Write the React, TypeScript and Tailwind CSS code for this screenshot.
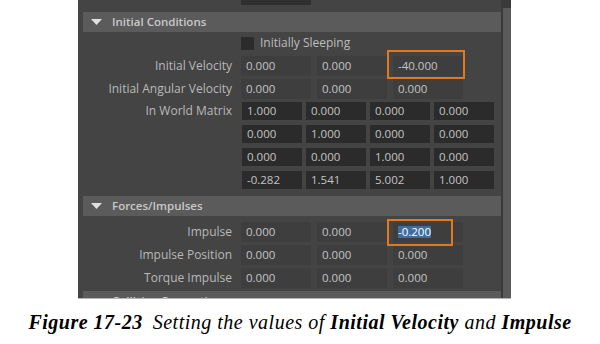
import React from 'react';

const ui = { fontFamily: '"Open Sans", "Noto Sans", sans-serif' };
const serif = { fontFamily: '"Liberation Serif", "DejaVu Serif", serif' };

const VecField: React.FC<{ value: string; children?: React.ReactNode }> = ({ value, children }) => (
    <div className="relative flex items-center w-[70px] h-[20px] pl-[5px] bg-[#3e3e3e] text-[11.5px] text-[#c4c4c4]">
        {value}
        {children}
    </div>
);

const MatField: React.FC<{ value: string }> = ({ value }) => (
    <div className="flex items-center w-[60px] h-[18px] pl-[5px] bg-[#2b2b2b] text-[11.5px] text-[#c4c4c4]">
        {value}
    </div>
);

const Label: React.FC<{ text?: string }> = ({ text }) => (
    <div className="w-[154px] shrink-0 text-right text-[12px] text-[#b9b9b9]">{text}</div>
);

const SectionHeader: React.FC<{ title: string; className?: string }> = ({ title, className }) => (
    <div className={`flex items-center shrink-0 ml-[5px] h-[20px] bg-[#5b5b5b] ${className ?? ''}`}>
        <svg width="11" height="6" viewBox="0 0 11 6" className="ml-[8px]">
            <polygon points="0,0 11,0 5.5,6" fill="#e0e0e0" />
        </svg>
        <span className="ml-[10px] text-[11.5px] font-semibold text-[#c9c9c9]">{title}</span>
    </div>
);

const VecRow: React.FC<{ label: string; values: string[]; third?: React.ReactNode }> = ({ label, values, third }) => (
    <div className="flex items-center shrink-0 h-[23px]">
        <Label text={label} />
        <div className="flex gap-[6px] ml-[9px]">
            <VecField value={values[0]} />
            <VecField value={values[1]} />
            {third ?? <VecField value={values[2]} />}
        </div>
    </div>
);

const matrix = [
    ['1.000', '0.000', '0.000', '0.000'],
    ['0.000', '1.000', '0.000', '0.000'],
    ['0.000', '0.000', '1.000', '0.000'],
    ['-0.282', '1.541', '5.002', '1.000'],
];

export default function App() {
    return (
        <div className="w-[600px] h-[344px] bg-white overflow-hidden">
            <div className="flex ml-[78px] w-[433px] h-[299px] overflow-hidden border-b border-[#b4b4b4]" style={ui}>
                <div className="flex-1 flex flex-col bg-[#444444]">
                    {/* row scrolled mostly out of view */}
                    <div className="flex items-center h-[18px] -mt-[13px] shrink-0">
                        <Label />
                        <div className="ml-[9px] flex items-center gap-[7px]">
                            <div className="w-[70px] h-[18px] pl-[5px] flex items-center bg-[#2f2f2f] text-[11.5px] text-[#c4c4c4]">0.000</div>
                            <div className="w-[4px] h-[16px] mt-[-8px] bg-[#d8d8d8]" />
                        </div>
                    </div>

                    <SectionHeader title="Initial Conditions" className="mt-[7px]" />

                    <div className="flex items-center h-[22px] shrink-0">
                        <div className="w-[154px] shrink-0" />
                        <div className="ml-[9px] w-[13px] h-[13px] bg-[#2b2b2b] rounded-[1px]" />
                        <span className="ml-[6px] text-[12px] text-[#bdbdbd]">Initially Sleeping</span>
                    </div>

                    <VecRow
                        label="Initial Velocity"
                        values={['0.000', '0.000']}
                        third={
                            <VecField value="-40.000">
                                <div className="absolute z-10 -left-[6px] -top-[6px] -right-[2px] -bottom-[3px] border-2 border-[#e2791e]" />
                            </VecField>
                        }
                    />
                    <VecRow label="Initial Angular Velocity" values={['0.000', '0.000', '0.000']} />

                    <div className="flex mt-[2px] shrink-0">
                        <div className="w-[154px] shrink-0 h-[18px] flex items-center justify-end text-[12px] text-[#b9b9b9]">
                            In World Matrix
                        </div>
                        <div className="ml-[10px] flex flex-col gap-[5px]">
                            {matrix.map((row, i) => (
                                <div key={i} className="flex gap-[4px]">
                                    {row.map((v, j) => (
                                        <MatField key={j} value={v} />
                                    ))}
                                </div>
                            ))}
                        </div>
                    </div>

                    <SectionHeader title="Forces/Impulses" className="mt-[7px]" />

                    <div className="mt-[4px] shrink-0">
                        <VecRow
                            label="Impulse"
                            values={['0.000', '0.000']}
                            third={
                                <div className="relative flex items-center w-[70px] h-[20px] pl-[5px] bg-[#3e3e3e] text-[11.5px]">
                                    <span className="bg-[#3f6e9e] text-white leading-[12px]">-0.200</span>
                                    <div className="absolute z-10 -left-[6px] -top-[3px] right-[10px] -bottom-[4px] border-2 border-[#e2791e]" />
                                </div>
                            }
                        />
                        <VecRow label="Impulse Position" values={['0.000', '0.000', '0.000']} />
                        <VecRow label="Torque Impulse" values={['0.000', '0.000', '0.000']} />
                    </div>

                    <SectionHeader title="Collision Properties" className="mt-[2px]" />
                </div>
                <div className="w-[10px] flex shrink-0 bg-[#3a3a3a]">
                    <div className="w-[2px] bg-[#3a3a3a]" />
                    <div className="flex-1 mt-[8px] bg-[#5a5a5a]" />
                </div>
            </div>

            <div className="mt-[8px] text-center text-[20px] tracking-[0.5px] text-black italic" style={serif}>
                <span className="font-bold">Figure 17-23</span>
                <span className="ml-[10px]">Setting the values of </span>
                <span className="font-bold">Initial Velocity</span>
                <span> and </span>
                <span className="font-bold">Impulse</span>
            </div>
        </div>
    );
}
